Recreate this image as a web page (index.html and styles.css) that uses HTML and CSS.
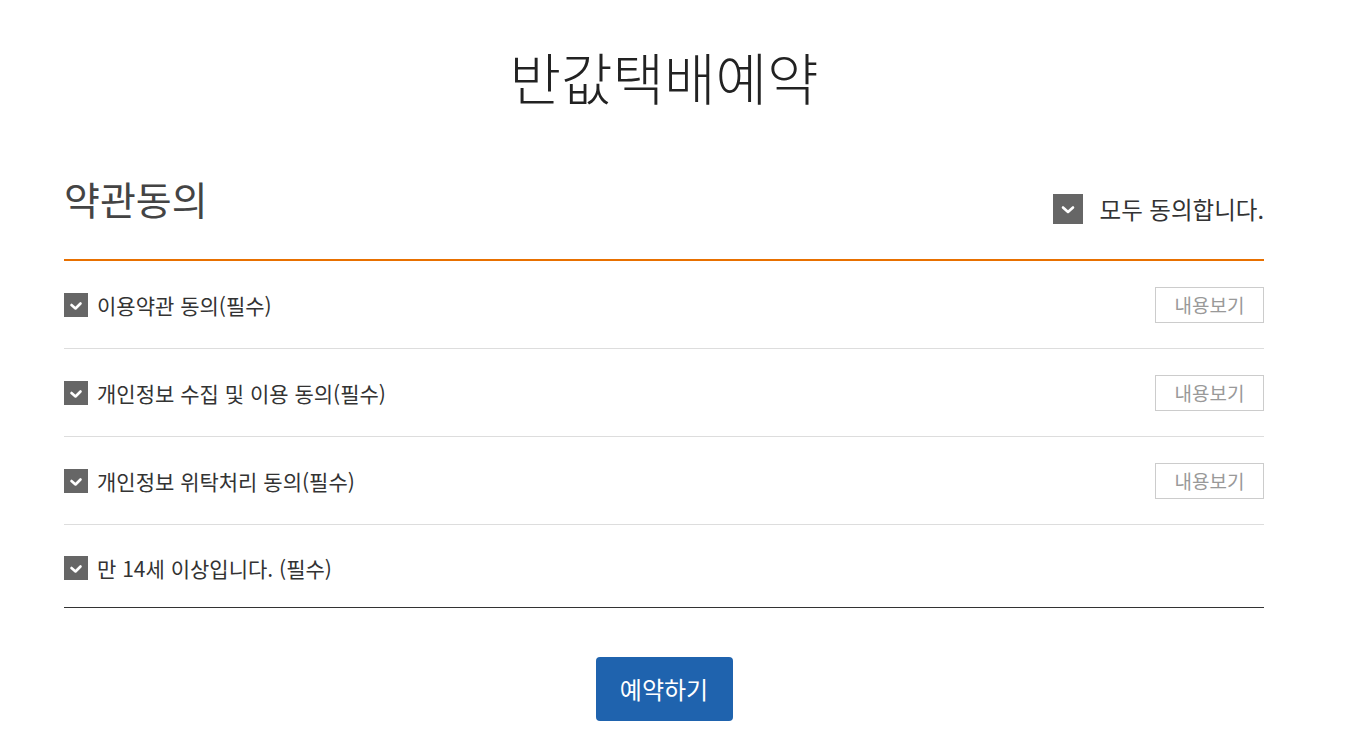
FILE: index.html
```html
<!DOCTYPE html>
<html lang="ko">
<head>
    <meta charset="UTF-8">
    <title>반값택배예약</title>
    <link rel="stylesheet" href="styles.css">
</head>
<body>

<div id="wrap">
    <h1 class="title">반값택배예약</h1>

    <div class="terms-head">
        <h2>약관동의</h2>
        <label class="all-check">
            <span class="chk chk-big"><svg viewBox="0 0 30 30"><path d="M10 13.5 L15 18 L20 13.5" /></svg></span>
            모두 동의합니다.
        </label>
    </div>

    <ul class="terms">
        <li>
            <label><span class="chk"><svg viewBox="0 0 24 24"><path d="M7.5 12 L11.5 15.5 L16.5 10.5" /></svg></span>이용약관 동의(필수)</label>
            <a class="view" href="#">내용보기</a>
        </li>
        <li>
            <label><span class="chk"><svg viewBox="0 0 24 24"><path d="M7.5 12 L11.5 15.5 L16.5 10.5" /></svg></span>개인정보 수집 및 이용 동의(필수)</label>
            <a class="view" href="#">내용보기</a>
        </li>
        <li>
            <label><span class="chk"><svg viewBox="0 0 24 24"><path d="M7.5 12 L11.5 15.5 L16.5 10.5" /></svg></span>개인정보 위탁처리 동의(필수)</label>
            <a class="view" href="#">내용보기</a>
        </li>
        <li>
            <label><span class="chk"><svg viewBox="0 0 24 24"><path d="M7.5 12 L11.5 15.5 L16.5 10.5" /></svg></span>만 14세 이상입니다. (필수)</label>
        </li>
    </ul>

    <div class="btn-area">
        <a class="btn-submit" href="#">예약하기</a>
    </div>
</div>

</body>
</html>
```

FILE: styles.css
```css
*{
    margin: 0;
    padding: 0;
    box-sizing: border-box;
}
body{
    padding-right: 18px;
    font-family: "Noto Sans CJK KR", "Noto Sans", sans-serif;
    color: #333;
    background: #fff;
}
a{
    text-decoration: none;
}
#wrap{
    width: 1200px;
    margin: 0 auto;
}
.title{
    padding-top: 36px;
    font-size: 56px;
    line-height: 80px;
    font-weight: 300;
    color: #222;
    text-align: center;
}
.terms-head{
    display: flex;
    justify-content: space-between;
    align-items: flex-start;
    margin-top: 53px;
    height: 92px;
    border-bottom: 2px solid #e87000;
}
.terms-head h2{
    font-size: 39px;
    font-weight: 400;
    color: #444;
    line-height: 58px;
}
.all-check{
    display: flex;
    align-items: center;
    margin-top: 25px;
    height: 30px;
    font-size: 23.5px;
    color: #333;
    cursor: pointer;
}
.chk{
    display: inline-block;
    width: 24px;
    height: 24px;
    background: #666;
    margin-right: 9px;
    flex-shrink: 0;
}
.chk svg{
    display: block;
    width: 100%;
    height: 100%;
}
.chk path{
    fill: none;
    stroke: #fff;
    stroke-width: 2.6;
    stroke-linecap: round;
    stroke-linejoin: round;
}
.chk-big{
    width: 30px;
    height: 30px;
    margin-right: 17px;
}
.terms{
    list-style: none;
    border-bottom: 1px solid #333;
}
.terms li{
    display: flex;
    justify-content: space-between;
    align-items: center;
    height: 88px;
    border-bottom: 1px solid #ddd;
}
.terms li:last-child{
    height: 82px;
    padding-top: 4px;
    border-bottom: none;
}
.terms label{
    display: flex;
    align-items: center;
    font-size: 21px;
    color: #333;
    cursor: pointer;
}
.view{
    display: block;
    width: 109px;
    height: 36px;
    line-height: 34px;
    border: 1px solid #ccc;
    text-align: center;
    font-size: 19px;
    color: #999;
}
.btn-area{
    text-align: center;
    padding-top: 49px;
}
.btn-submit{
    display: inline-block;
    width: 137px;
    height: 64px;
    line-height: 64px;
    background: #1f63ae;
    color: #fff;
    font-size: 24px;
    border-radius: 4px;
}
```
